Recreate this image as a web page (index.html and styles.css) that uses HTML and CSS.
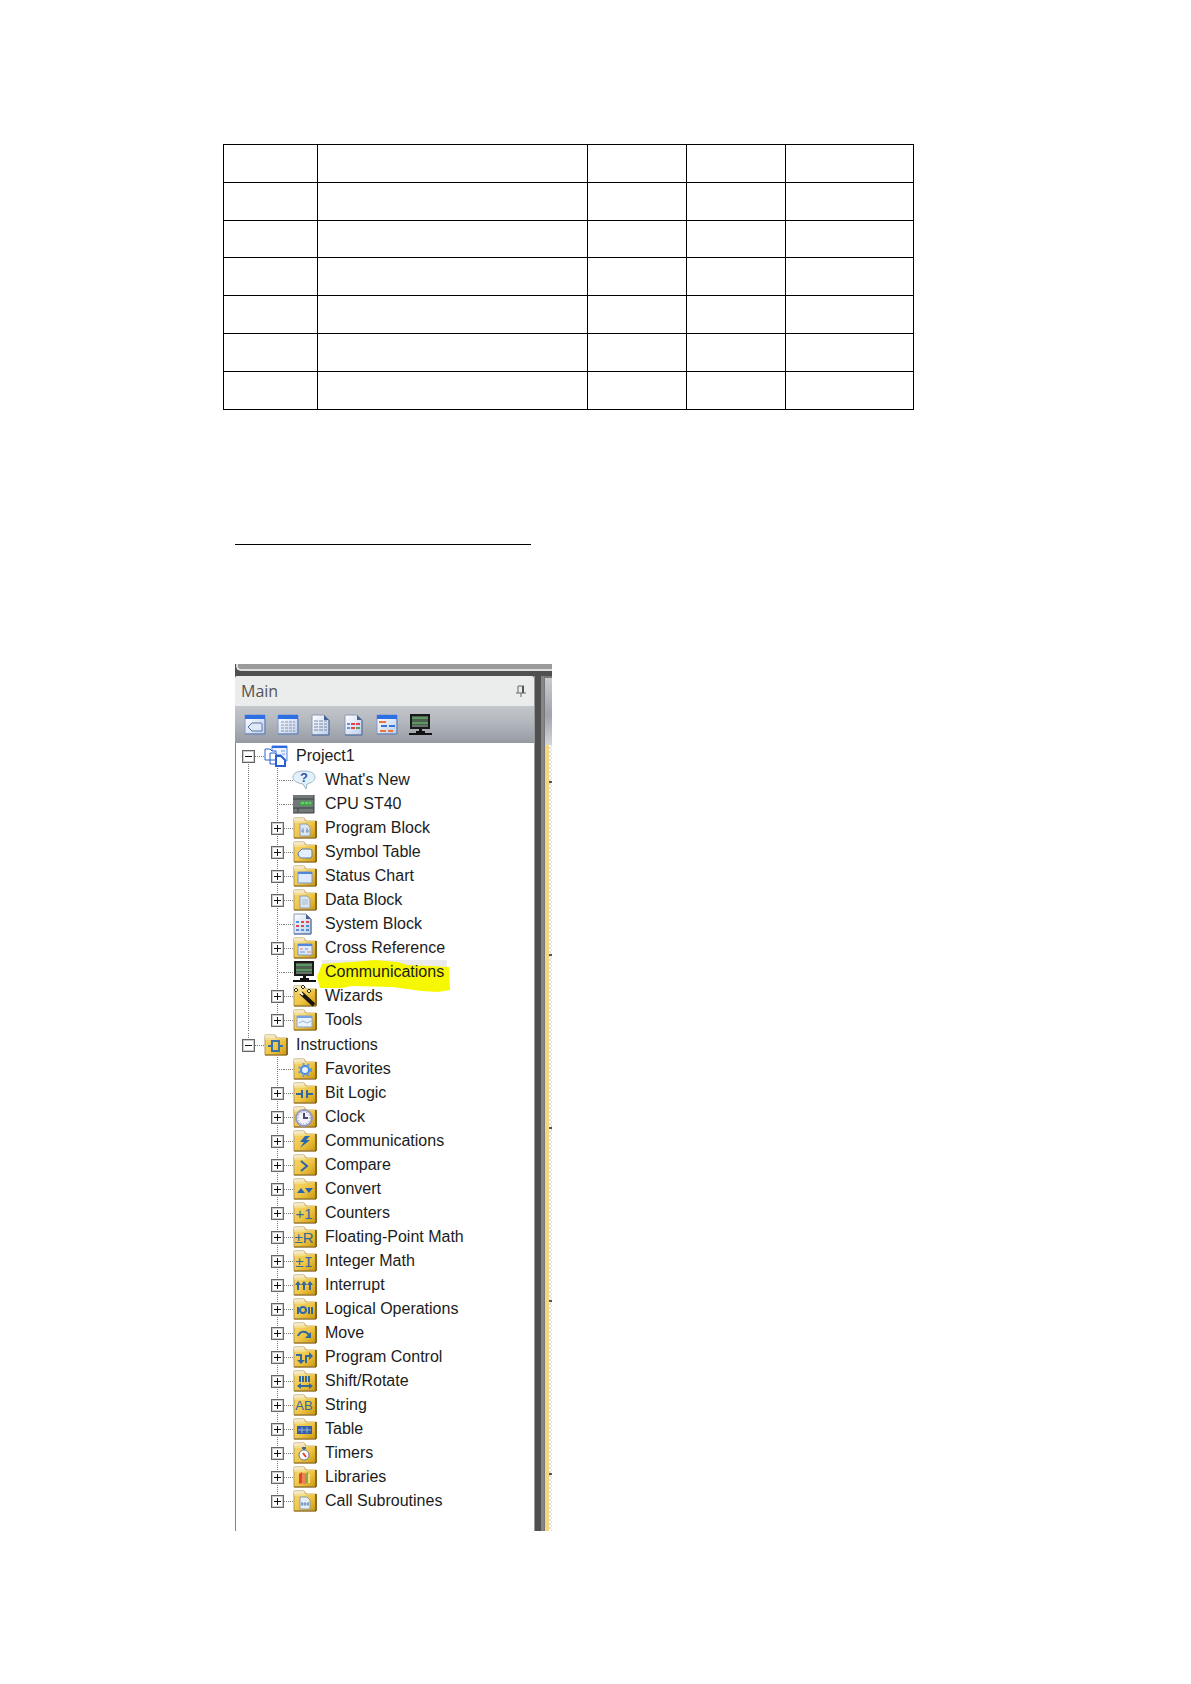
FILE: index.html
```html
<!DOCTYPE html>
<html lang="en">
<head>
<meta charset="utf-8">
<title>Project1</title>
<link rel="stylesheet" href="styles.css">
</head>
<body>
<svg class="defs" aria-hidden="true">
  <defs>
    <linearGradient id="gold" x1="0" y1="0" x2="1" y2="1"><stop offset="0" stop-color="#f6d978"/><stop offset=".55" stop-color="#f0c545"/><stop offset="1" stop-color="#c8960c"/></linearGradient>
    <linearGradient id="pale" x1="0" y1="0" x2="1" y2="1"><stop offset="0" stop-color="#fff"/><stop offset="1" stop-color="#bccdeb"/></linearGradient>
    <symbol id="folder" viewBox="0 0 24 22">
      <path d="M1 3V1h10l2 3h10v17H1z" fill="url(#gold)" stroke="#b2985a"/>
      <path d="M1 1h10l1 3H1z" fill="#f3e6c0"/><path d="M1 5h11l2-1h8" fill="none" stroke="#fae8a6"/>
      <path d="M23 4v17" stroke="#8a6a20" stroke-width="2"/><path d="M1 21h22" stroke="#8a6a20"/>
    </symbol>
    <symbol id="page" viewBox="0 0 20 22">
      <path d="M1 1h12l5 5v15H1z" fill="url(#pale)" stroke="#8898b4"/><path d="M13 1v5h5z" fill="#456291"/><path d="M18 6v15H1" fill="none" stroke="#506a98"/>
    </symbol>
    <symbol id="window" viewBox="0 0 22 21">
      <path d="M1 1h20v19H1z" fill="url(#pale)" stroke="#7f9bce"/><path d="M1 1h20v4H1z" fill="#2e70e4"/><path d="M21 5v15H1" fill="none" stroke="#6680ad"/>
    </symbol>
    <symbol id="monitor" viewBox="0 0 24 22">
      <path d="M3 1h18v13H3z" fill="#4f5e52" stroke="#1a1a1a" stroke-width="2"/><path d="M4 4h16M4 9h16" stroke="#5b9a5f" stroke-width="2"/><path d="M4 12h16" stroke="#7d8a80"/><path d="M11 15h3v5h-3z" fill="#111"/><path d="M8 18h9M1 20h23" stroke="#111" stroke-width="2"/>
    </symbol>
  </defs>
</svg>
<main class="page">
  <table class="grid" aria-label="Blank table">
    <colgroup><col class="c1"><col class="c2"><col class="c3"><col class="c3"><col></colgroup>
    <tbody>
      <tr><td></td><td></td><td></td><td></td><td></td></tr>
      <tr><td></td><td></td><td></td><td></td><td></td></tr>
      <tr class="short"><td></td><td></td><td></td><td></td><td></td></tr>
      <tr><td></td><td></td><td></td><td></td><td></td></tr>
      <tr><td></td><td></td><td></td><td></td><td></td></tr>
      <tr><td></td><td></td><td></td><td></td><td></td></tr>
      <tr><td></td><td></td><td></td><td></td><td></td></tr>
    </tbody>
  </table>
  <hr class="rule">
  <section class="window" aria-label="Main">
    <div class="strip"></div>
    <div class="body">
      <div class="pane">
        <header class="title"><span>Main</span>
          <button class="pin" aria-label="Pin"><svg width="10" height="12" viewBox="0 0 10 12"><path d="M2 1h6M2 1v7M0 8h10M5 8v4" fill="none" stroke="#666" stroke-width="1"/><path d="M7 1v7" stroke="#555" stroke-width="2"/></svg></button>
        </header>
        <div class="toolbar">
          <button aria-label="Symbol Table"><svg viewBox="0 0 24 24"><use href="#window" x="1" y="1" width="22" height="21"/><path d="M5 14l4-4h9q1 0 1 1v7H9z" fill="#dfe9f9" stroke="#5d76a5"/></svg></button>
          <button aria-label="Status Chart"><svg viewBox="0 0 24 24"><use href="#window" x="1" y="1" width="22" height="21"/><path d="M5 9h14M5 12h14M5 15h14M5 18h14" stroke="#8794ab" stroke-dasharray="3 1"/></svg></button>
          <button aria-label="Data Block"><svg viewBox="0 0 24 24"><use href="#page" x="2" y="1" width="20" height="22"/><path d="M5 8h13M5 11h13M5 14h13M5 17h13" stroke="#78889f" stroke-dasharray="4 1"/></svg></button>
          <button aria-label="System Block"><svg viewBox="0 0 24 24"><use href="#page" x="2" y="1" width="20" height="22"/><path d="M5 11h3M5 15h3" stroke="#6b93dd" stroke-width="2"/><path d="M9 11h4M14 11h4M9 15h4" stroke="#e5444b" stroke-width="2"/><path d="M14 15h4" stroke="#55a853" stroke-width="2"/></svg></button>
          <button aria-label="Cross Reference"><svg viewBox="0 0 24 24"><use href="#window" x="1" y="1" width="22" height="21"/><path d="M4 9h7M5 18h6M13 18h5" stroke="#e9763d" stroke-width="2"/><path d="M6 13h6M14 13h6" stroke="#3775dc" stroke-width="2"/></svg></button>
          <button aria-label="Communications"><svg viewBox="0 0 24 24"><use href="#monitor" y="1" width="24" height="22"/></svg></button>
        </div>
        <ul class="tree">
          <li class="branch">
            <div class="row"><button class="toggle minus" aria-label="Collapse"></button><i class="link"></i><svg class="icon" viewBox="0 0 24 22"><path d="M8 1h15v15H8z" fill="#edf4ff" stroke="#4f82e4"/><path d="M8 2h15" stroke="#2c6ae0" stroke-width="2"/><path d="M17 6h4M18 9h3" stroke="#719be3"/><path d="M1 4h5l2 2h4v9H1zM6 8h5l2 2h4v9H6z" fill="#fff" stroke="#2860d4"/><path d="M12 11h5l4 4v6h-9z" fill="#fff" stroke="#2860d4" stroke-width="2"/></svg><span class="label">Project1</span></div>
            <ul class="children">
              <li class="row"><i class="stub"></i><i class="link"></i><svg class="icon" viewBox="0 0 24 22"><path d="M11 2c6 0 11 2 11 6s-4 6-8 7l-1 5-3-5C4 14 0 12 0 8s5-6 11-6z" fill="#e2f2fc" stroke="#9cb6c5"/><text x="11" y="13" class="glyph help">?</text></svg><span class="label">What's New</span></li>
              <li class="row"><i class="stub"></i><i class="link"></i><svg class="icon" viewBox="0 0 24 22"><path d="M0 2h21v18H0z" fill="#73787a"/><path d="M0 6h21M0 15h21M5 15v4M21 2v18H0" fill="none" stroke="#3c4140"/><path d="M7 8h12v5H7z" fill="#4ca04f"/><path d="M8 10h10" stroke="#5ed767" stroke-width="2" stroke-dasharray="3 1"/></svg><span class="label">CPU ST40</span></li>
              <li class="row"><button class="toggle" aria-label="Expand"></button><i class="link"></i><svg class="icon" viewBox="0 0 24 22"><use href="#folder"/><path d="M7 7h7l3 3v9H7z" fill="#dce6f3" stroke="#8e9fae"/><path d="M10 11v5M14 11v5M8 14h3M13 14h3" stroke="#6d91bd"/></svg><span class="label">Program Block</span></li>
              <li class="row"><button class="toggle" aria-label="Expand"></button><i class="link"></i><svg class="icon" viewBox="0 0 24 22"><use href="#folder"/><path d="M5 12l4-4h8q2 0 2 2v5q0 2-2 2H8q-3-1-3-5z" fill="#e5effd" stroke="#597db6"/></svg><span class="label">Symbol Table</span></li>
              <li class="row"><button class="toggle" aria-label="Expand"></button><i class="link"></i><svg class="icon" viewBox="0 0 24 22"><use href="#folder"/><path d="M5 7h14v11H5z" fill="#dfebfc" stroke="#7299d7"/><path d="M5 8h14" stroke="#4f86dc" stroke-width="2"/></svg><span class="label">Status Chart</span></li>
              <li class="row"><button class="toggle" aria-label="Expand"></button><i class="link"></i><svg class="icon" viewBox="0 0 24 22"><use href="#folder"/><path d="M7 7h7l3 3v9H7z" fill="#dce6f3" stroke="#8e9fae"/><path d="M9 11h6M9 13h6M9 15h6" stroke="#a9bbce"/></svg><span class="label">Data Block</span></li>
              <li class="row"><i class="stub"></i><i class="link"></i><svg class="icon" viewBox="0 0 24 22"><use href="#page" x="0" width="20" height="22"/><path d="M3 9h3M3 17h3M8 17h3" stroke="#5791e6" stroke-width="2"/><path d="M8 9h3M13 9h3M3 13h3M8 13h3" stroke="#df4655" stroke-width="2"/><path d="M13 13h3M13 17h3" stroke="#4c90d2" stroke-width="2"/></svg><span class="label">System Block</span></li>
              <li class="row"><button class="toggle" aria-label="Expand"></button><i class="link"></i><svg class="icon" viewBox="0 0 24 22"><use href="#folder"/><path d="M5 7h14v11H5z" fill="#dfebfc" stroke="#7299d7"/><path d="M5 8h14" stroke="#4f86dc" stroke-width="2"/><path d="M7 12h3M14 15h4" stroke="#e38463"/><path d="M7 15h5M12 12h3" stroke="#6a91db"/></svg><span class="label">Cross Reference</span></li>
              <li class="row"><i class="stub"></i><i class="link"></i><svg class="icon" viewBox="0 0 24 22"><use href="#monitor" x="-1" width="24" height="22"/></svg><span class="label marked"><svg class="marker" width="135" height="34" viewBox="0 0 135 34" aria-hidden="true"><path d="M6 5L36 3 59 1 82 3 91 6 133 8 134 31 122 33 106 32 76 28 36 27 26 29H4L1 18z" fill="#f5f800"/></svg>Communications</span></li>
              <li class="row"><button class="toggle" aria-label="Expand"></button><i class="link"></i><svg class="icon" viewBox="0 0 24 22"><use href="#folder"/><path d="M8 8l13 12" stroke="#18150f" stroke-width="4"/><path d="M7 7l3 3" stroke="#fff4c2" stroke-width="2"/><path d="M3 3l2 2-2 2-2-2zM10 0l2 2-2 2-2-2zM16 4l2 2-2 2-2-2z" fill="#fff5ad" stroke="#2f2816"/></svg><span class="label">Wizards</span></li>
              <li class="row"><button class="toggle" aria-label="Expand"></button><i class="link"></i><svg class="icon" viewBox="0 0 24 22"><use href="#folder"/><path d="M4 7h15v11H4z" fill="#e9f2ff" stroke="#83a7dd"/><path d="M4 8h15" stroke="#74a0e4" stroke-width="2"/><path d="M6 14l4-2 4 2 4-2" fill="none" stroke="#9bb5d4"/></svg><span class="label">Tools</span></li>
            </ul>
          </li>
          <li class="branch">
            <div class="row"><button class="toggle minus" aria-label="Collapse"></button><i class="link"></i><svg class="icon" viewBox="0 0 24 22"><use href="#folder"/><path d="M8 7h7v10H8zM4 12h4M15 12h4" fill="none" stroke="#3a72a8" stroke-width="2"/></svg><span class="label">Instructions</span></div>
            <ul class="children">
              <li class="row"><i class="stub"></i><i class="link"></i><svg class="icon" viewBox="0 0 24 22"><use href="#folder"/><circle cx="12" cy="12" r="4" fill="#e8f1ff" stroke="#488ced" stroke-width="2"/><circle cx="12" cy="12" r="6" fill="none" stroke="#5a9aef" stroke-width="2" stroke-dasharray="2 3"/></svg><span class="label">Favorites</span></li>
              <li class="row"><button class="toggle" aria-label="Expand"></button><i class="link"></i><svg class="icon" viewBox="0 0 24 22"><use href="#folder"/><path d="M3 12h6M9 8v8M14 8v8M14 12h6" stroke="#31689e" stroke-width="2"/></svg><span class="label">Bit Logic</span></li>
              <li class="row"><button class="toggle" aria-label="Expand"></button><i class="link"></i><svg class="icon" viewBox="0 0 24 22"><use href="#folder"/><circle cx="11" cy="12" r="8" fill="#f3f3fc" stroke="#9596bb" stroke-width="2"/><circle cx="11" cy="12" r="6" fill="none" stroke="#777aa6" stroke-dasharray="1 2"/><path d="M11 7v5h4" fill="none" stroke="#46486d" stroke-width="2"/></svg><span class="label">Clock</span></li>
              <li class="row"><button class="toggle" aria-label="Expand"></button><i class="link"></i><svg class="icon" viewBox="0 0 24 22"><use href="#folder"/><path d="M12 6h5l-4 4h4L7 18l4-6H7z" fill="#2866ae"/></svg><span class="label">Communications</span></li>
              <li class="row"><button class="toggle" aria-label="Expand"></button><i class="link"></i><svg class="icon" viewBox="0 0 24 22"><use href="#folder"/><path d="M8 7l6 5-6 5" fill="none" stroke="#2866ae" stroke-width="2"/></svg><span class="label">Compare</span></li>
              <li class="row"><button class="toggle" aria-label="Expand"></button><i class="link"></i><svg class="icon" viewBox="0 0 24 22"><use href="#folder"/><path d="M4 15l4-5 4 5zM12 10h8l-4 5z" fill="#2866ae"/></svg><span class="label">Convert</span></li>
              <li class="row"><button class="toggle" aria-label="Expand"></button><i class="link"></i><svg class="icon" viewBox="0 0 24 22"><use href="#folder"/><text x="11" y="17" class="glyph">+1</text></svg><span class="label">Counters</span></li>
              <li class="row"><button class="toggle" aria-label="Expand"></button><i class="link"></i><svg class="icon" viewBox="0 0 24 22"><use href="#folder"/><text x="11" y="17" class="glyph">±R</text></svg><span class="label">Floating-Point Math</span></li>
              <li class="row"><button class="toggle" aria-label="Expand"></button><i class="link"></i><svg class="icon" viewBox="0 0 24 22"><use href="#folder"/><text x="11" y="17" class="glyph mono">±I</text></svg><span class="label">Integer Math</span></li>
              <li class="row"><button class="toggle" aria-label="Expand"></button><i class="link"></i><svg class="icon" viewBox="0 0 24 22"><use href="#folder"/><path d="M5 9v7M11 9v7M17 9v7" stroke="#31689e" stroke-width="2"/><path d="M2 11l3-4 3 4zM8 11l3-4 3 4zM14 11l3-4 3 4z" fill="#31689e"/></svg><span class="label">Interrupt</span></li>
              <li class="row"><button class="toggle" aria-label="Expand"></button><i class="link"></i><svg class="icon" viewBox="0 0 24 22"><use href="#folder"/><path d="M5 9v7M16 9v7M19 9v7" stroke="#31689e" stroke-width="2"/><circle cx="10" cy="12" r="3" fill="none" stroke="#31689e" stroke-width="2"/></svg><span class="label">Logical Operations</span></li>
              <li class="row"><button class="toggle" aria-label="Expand"></button><i class="link"></i><svg class="icon" viewBox="0 0 24 22"><use href="#folder"/><path d="M5 14c2-5 8-6 11-1" fill="none" stroke="#31689e" stroke-width="2"/><path d="M18 10v6h-6z" fill="#31689e"/></svg><span class="label">Move</span></li>
              <li class="row"><button class="toggle" aria-label="Expand"></button><i class="link"></i><svg class="icon" viewBox="0 0 24 22"><use href="#folder"/><path d="M3 9h5v6M13 17v-7h4" fill="none" stroke="#31689e" stroke-width="2"/><path d="M4 14h8l-4 4zM16 6l4 4-4 4z" fill="#31689e"/></svg><span class="label">Program Control</span></li>
              <li class="row"><button class="toggle" aria-label="Expand"></button><i class="link"></i><svg class="icon" viewBox="0 0 24 22"><use href="#folder"/><path d="M7 6v6M10 6v6M13 6v6M16 6v6M6 16h12" stroke="#31689e" stroke-width="2"/><path d="M4 16l4-3v6zM20 16l-4-3v6z" fill="#31689e"/></svg><span class="label">Shift/Rotate</span></li>
              <li class="row"><button class="toggle" aria-label="Expand"></button><i class="link"></i><svg class="icon" viewBox="0 0 24 22"><use href="#folder"/><text x="11" y="16" class="glyph letters">AB</text></svg><span class="label">String</span></li>
              <li class="row"><button class="toggle" aria-label="Expand"></button><i class="link"></i><svg class="icon" viewBox="0 0 24 22"><use href="#folder"/><path d="M4 8h15v8H4z" fill="#315dac"/><path d="M5 12h13M9 9v6M14 9v6" stroke="#9eb4d6"/></svg><span class="label">Table</span></li>
              <li class="row"><button class="toggle" aria-label="Expand"></button><i class="link"></i><svg class="icon" viewBox="0 0 24 22"><use href="#folder"/><path d="M11 5v3M9 6h4" stroke="#416995" stroke-width="2"/><circle cx="11" cy="13" r="5" fill="#fff" stroke="#607da1"/><path d="M10 11l3 4" stroke="#ed3c28" stroke-width="2"/></svg><span class="label">Timers</span></li>
              <li class="row"><button class="toggle" aria-label="Expand"></button><i class="link"></i><svg class="icon" viewBox="0 0 24 22"><use href="#folder"/><path d="M6 8l3-2v11l-3 1z" fill="#d84930"/><path d="M9 7h3v11H9z" fill="#ef8251"/><path d="M12 8l3-2v11l-3 1z" fill="#8ca646"/><path d="M15 8h2v9h-2z" fill="#efdf8c"/></svg><span class="label">Libraries</span></li>
              <li class="row"><button class="toggle" aria-label="Expand"></button><i class="link"></i><svg class="icon" viewBox="0 0 24 22"><use href="#folder"/><path d="M7 7h7l3 3v9H7z" fill="#e8eff7" stroke="#8e9fae"/><path d="M9 12v4M12 12v4M15 12v4M8 14h8" stroke="#6387ba"/></svg><span class="label">Call Subroutines</span></li>
            </ul>
          </li>
        </ul>
      </div>
      <div class="splitter"></div>
      <div class="editor"><div class="editor-head"></div><div class="editor-body"></div></div>
    </div>
  </section>
</main>
</body>
</html>
```
FILE: styles.css
```css
* { box-sizing: border-box; }
body { margin: 0; background: #fff; color: #1c1c1c; font: 16px/24px "Liberation Sans", Arial, sans-serif; }
button { border: 0; padding: 0; background: none; }
ul { margin: 0; padding: 0; list-style: none; }
.defs { position: absolute; width: 0; height: 0; }
.page { padding: 144px 277px 153px 223px; }

.grid { width: 100%; table-layout: fixed; border-collapse: collapse; }
.grid td { height: 38px; padding: 0; border: 1px solid #000; }
.grid .short td { height: 37px; }
.c1 { width: 94px; }
.c2 { width: 270px; }
.c3 { width: 99px; }

.rule { max-width: 296px; height: 1px; margin: 134px 0 119px 12px; border: 0; background: #000; }

.window { max-width: 317px; margin-left: 12px; background: #505050; }
.strip { height: 7px; margin-left: 1px; background: #9b9b9b; border: solid #dedede; border-width: 0 0 2px 2px; border-bottom-left-radius: 5px; }
.body { display: grid; grid-template-columns: 1fr 11px 7px; padding-top: 5px; }
.title { display: flex; align-items: center; justify-content: space-between; height: 30px; padding: 0 8px 0 6px; background: #ebecec; border-radius: 2px 2px 0 0; color: #555; font-family: "Open Sans", sans-serif; }
.pin { display: flex; }
.toolbar { display: flex; align-items: center; gap: 9px; height: 37px; padding-left: 8px; background: linear-gradient(#c4c8cd, #b2b6bd 45%, #969ba3); }
.toolbar button { width: 24px; height: 24px; }
.toolbar svg { display: block; width: 24px; height: 24px; }
.splitter { background: linear-gradient(90deg, #999 0 1px, #505050 1px 7px, #858585 7px 10px, #777 10px); }
.editor { display: flex; flex-direction: column; }
.editor-head { height: 69px; border-top: 2px solid #777; background: linear-gradient(#c9cbd2, #a0a3ac 55%, #d3d5dc); }
.editor-body {
  flex: 1;
  background:
    linear-gradient(#555, #555) 4px 36px / 3px 2px no-repeat,
    linear-gradient(#555, #555) 4px 209px / 3px 2px no-repeat,
    linear-gradient(#555, #555) 4px 382px / 3px 2px no-repeat,
    linear-gradient(#555, #555) 4px 555px / 3px 2px no-repeat,
    linear-gradient(#555, #555) 4px 728px / 3px 2px no-repeat,
    linear-gradient(90deg, #f5d681 0 4px, transparent 4px),
    repeating-conic-gradient(#dedede 0 25%, #fff 0 50%) 0 0 / 4px 4px;
}

.tree { display: flex; flex-direction: column; gap: 1px; padding: 1px 0 18px; background: #fff; border-left: 1px solid #858585; }
.branch { background: repeating-linear-gradient(#777 0 1px, #fff 1px 2px) 12px 12px / 1px 100% no-repeat; }
.branch:last-child { background-position: 12px 0; background-size: 1px 12px; }
.row { display: flex; align-items: center; height: 24px; padding-left: 6px; }
.children .row { padding-left: 35px; background: repeating-linear-gradient(#777 0 1px, #fff 1px 2px) 41px 0 / 1px 24px no-repeat; }
.children .row:last-child { background-size: 1px 12px; }
.toggle { flex: none; width: 13px; height: 13px; border: 1px solid #666; background: linear-gradient(#111, #111) center / 7px 1px no-repeat, linear-gradient(#111, #111) center / 1px 7px no-repeat, #fff; box-shadow: inset 0 0 0 1px #ccc; }
.toggle.minus { background: linear-gradient(#111, #111) center / 7px 1px no-repeat, #fff; }
.link, .stub { flex: none; width: 9px; height: 1px; background: repeating-linear-gradient(90deg, #777 0 1px, #fff 1px 2px); }
.stub { width: 7px; margin-left: 6px; }
.icon { flex: none; width: 24px; height: 22px; margin-right: 5px; overflow: visible; }
.label { position: relative; padding: 0 3px; white-space: nowrap; }
.marked { isolation: isolate; background: linear-gradient(#ebebeb, #ebebeb) 0 0 / 100% 12px no-repeat; }
.marker { position: absolute; z-index: -1; left: -6px; top: -1px; }
.glyph { fill: #31689e; stroke: none; font: 15px "Liberation Sans", Arial, sans-serif; text-anchor: middle; }
.glyph.help { fill: #3354ad; font-size: 13px; font-weight: bold; }
.glyph.letters { font-size: 13px; }
.glyph.mono { font-family: "Liberation Mono", monospace; }
```
